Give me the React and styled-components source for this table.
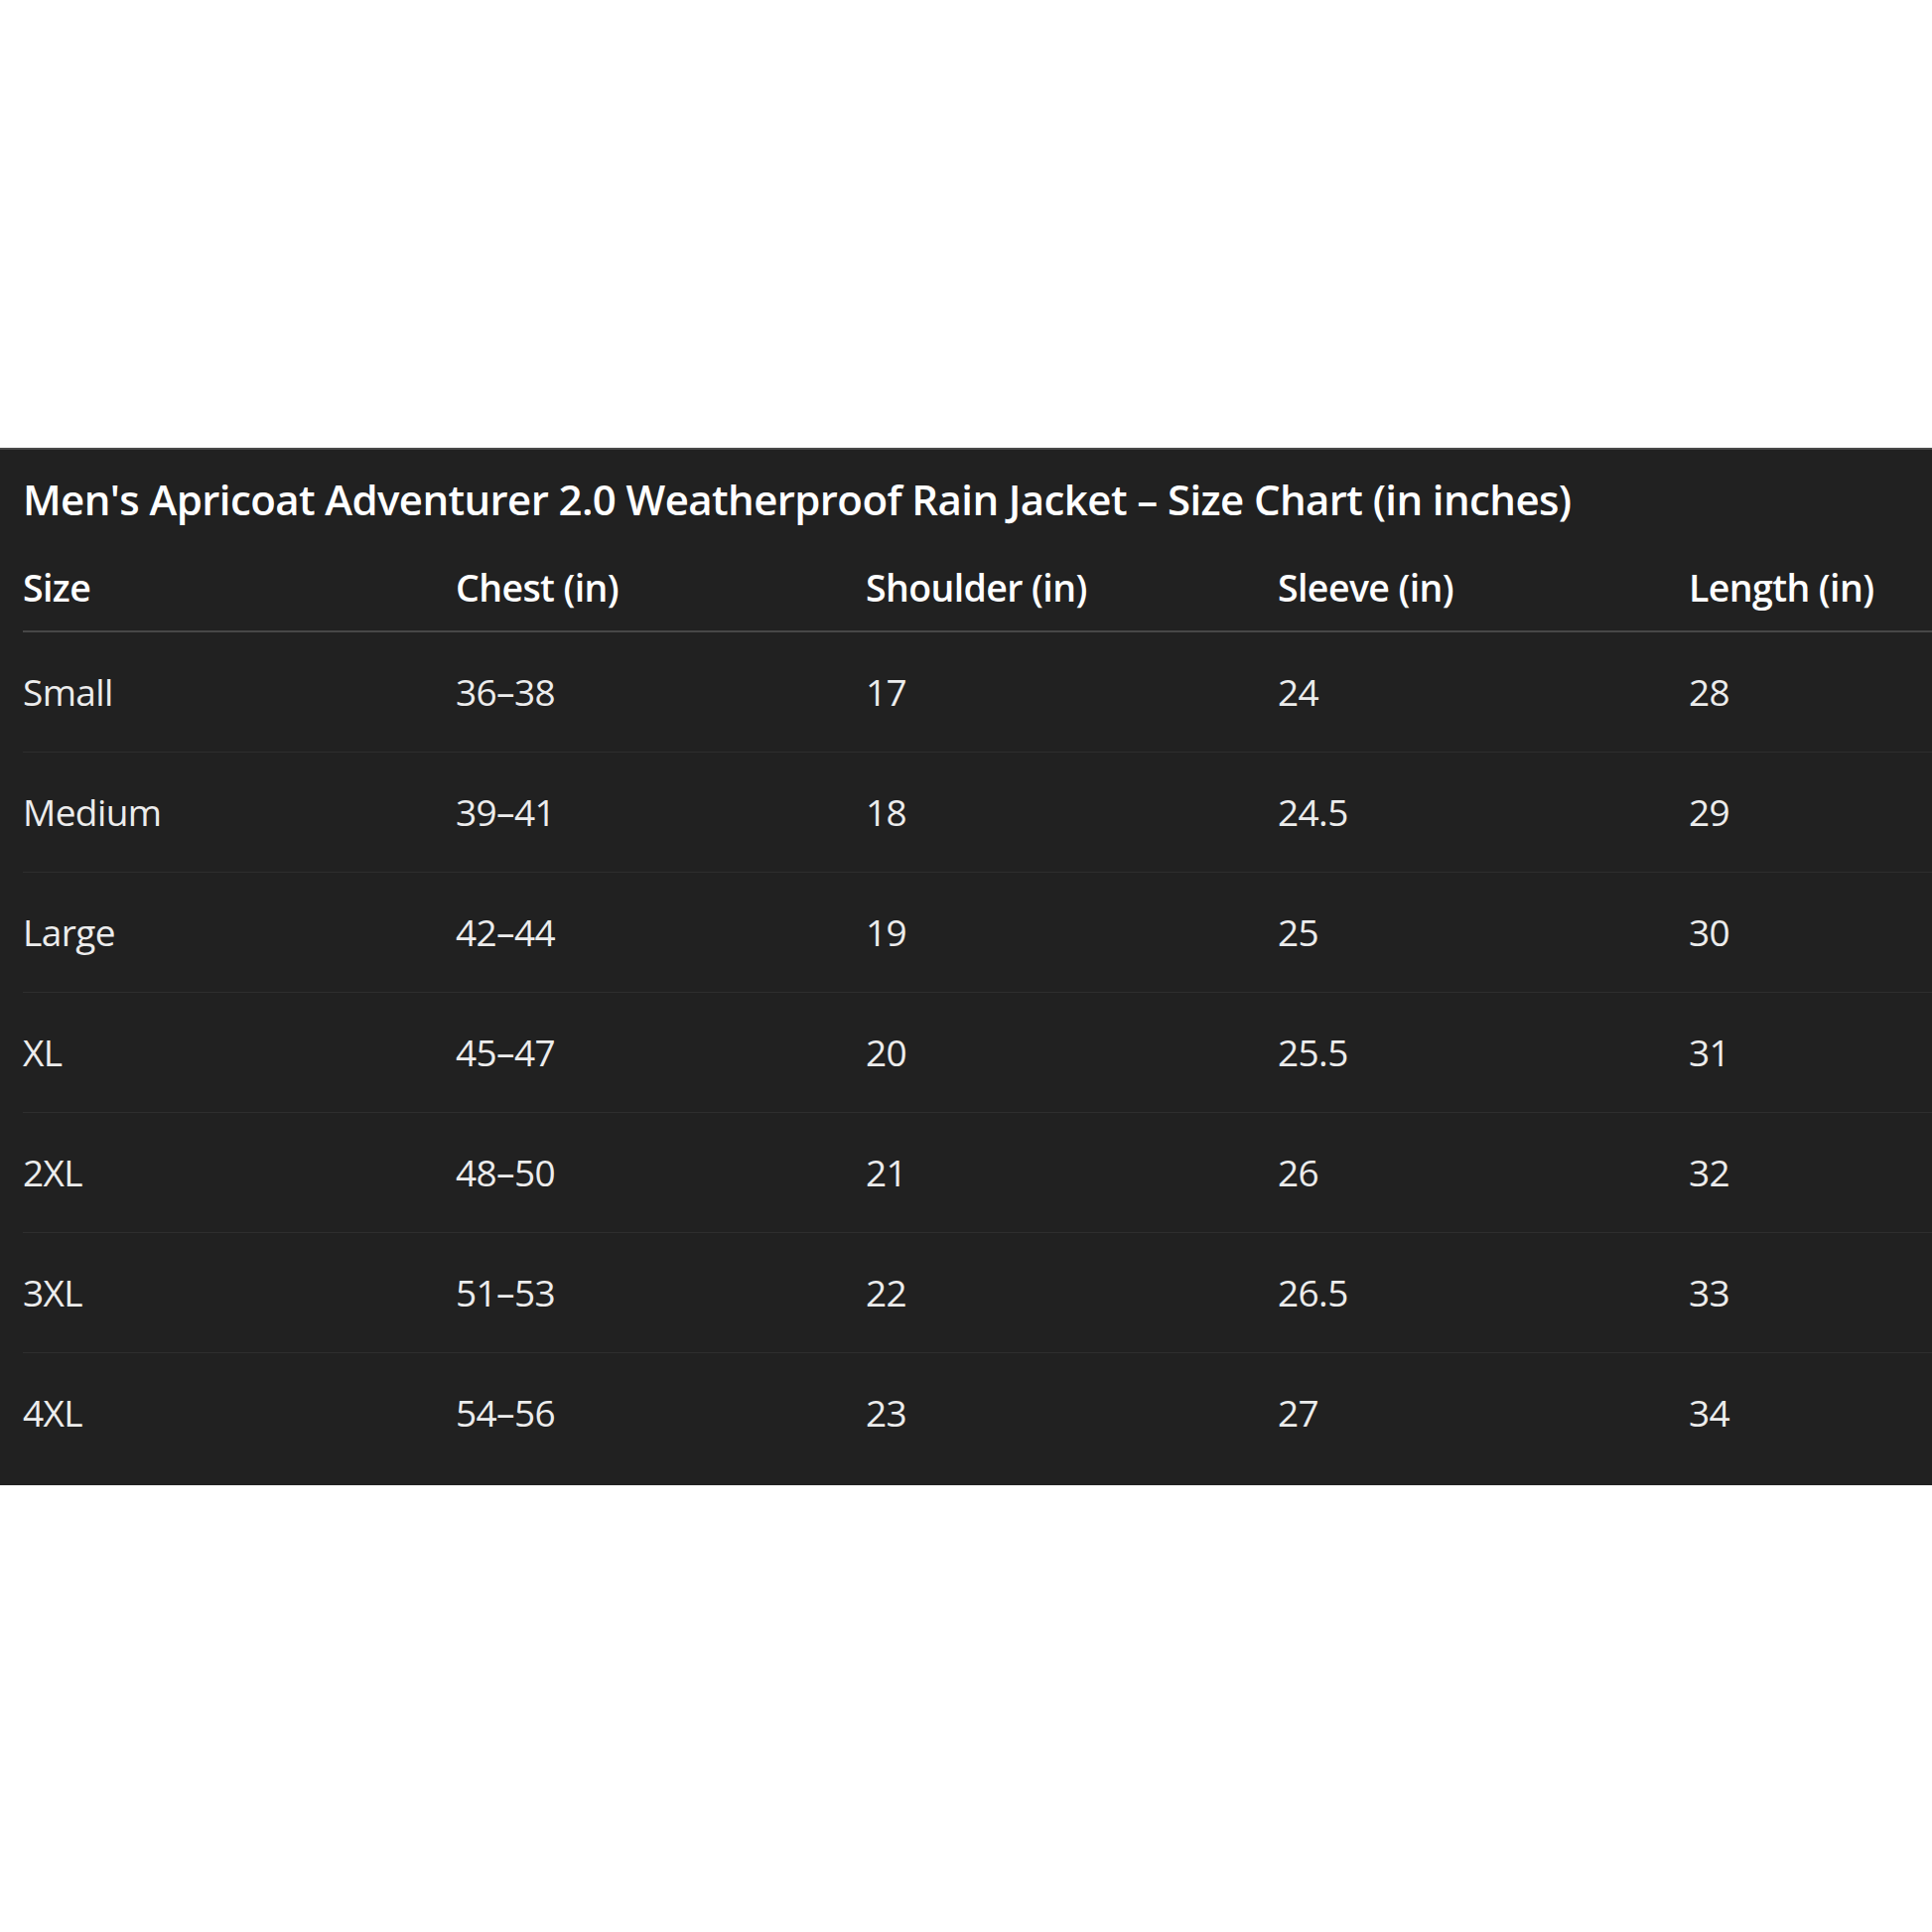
import React from "react";
import styled, { createGlobalStyle } from "styled-components";

const GlobalStyle = createGlobalStyle`
  html, body {
    margin: 0;
    padding: 0;
    background: #ffffff;
  }
  body {
    font-family: "Open Sans", "Noto Sans", sans-serif;
  }
`;

const Page = styled.div`
  min-height: 100vh;
  display: flex;
  align-items: center;
`;

const Panel = styled.section`
  width: 100%;
  box-sizing: border-box;
  background: #212121;
  border-top: 2px solid #4a4a4a;
  padding: 20px 0 13px 23px;
  overflow: hidden;
`;

const Title = styled.h2`
  margin: 0 0 16px 0;
  font-size: 42px;
  line-height: 60px;
  font-weight: 600;
  color: #ffffff;
  white-space: nowrap;
  letter-spacing: -0.6px;
`;

const Grid = styled.div`
  display: grid;
  grid-template-columns: 436px 413px 415px 414px 1fr;
`;

const HeadCell = styled.div`
  height: 86px;
  display: flex;
  align-items: center;
  border-bottom: 2px solid #474747;
  font-size: 37.5px;
  font-weight: 600;
  color: #ffffff;
  white-space: nowrap;
  letter-spacing: -0.6px;
`;

const Cell = styled.div`
  height: 120px;
  display: flex;
  align-items: center;
  border-bottom: ${(p) => (p.$last ? "none" : "1px solid #2e2e2e")};
  font-size: 37px;
  color: #ececec;
  white-space: nowrap;
  letter-spacing: -0.6px;
`;

const columns = ["Size", "Chest (in)", "Shoulder (in)", "Sleeve (in)", "Length (in)"];

const rows = [
  ["Small", "36–38", "17", "24", "28"],
  ["Medium", "39–41", "18", "24.5", "29"],
  ["Large", "42–44", "19", "25", "30"],
  ["XL", "45–47", "20", "25.5", "31"],
  ["2XL", "48–50", "21", "26", "32"],
  ["3XL", "51–53", "22", "26.5", "33"],
  ["4XL", "54–56", "23", "27", "34"]
];

export default function App() {
  return (
    <Page>
      <GlobalStyle />
      <Panel>
        <Title>Men's Apricoat Adventurer 2.0 Weatherproof Rain Jacket – Size Chart (in inches)</Title>
        <Grid>
          {columns.map((c) => (
            <HeadCell key={c}>{c}</HeadCell>
          ))}
          {rows.map((row, i) =>
            row.map((v, j) => (
              <Cell key={i + "-" + j} $last={i === rows.length - 1}>
                {v}
              </Cell>
            ))
          )}
        </Grid>
      </Panel>
    </Page>
  );
}
